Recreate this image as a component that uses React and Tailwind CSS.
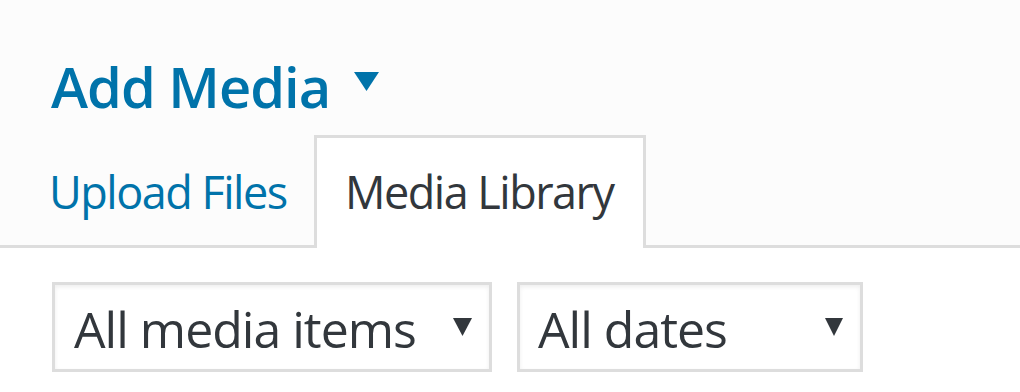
export default function App() {
  return (
    <div className="w-[1020px] h-[392px] bg-white overflow-hidden font-['Open_Sans','Noto_Sans',sans-serif]">
      {/* modal header */}
      <div className="bg-[#fcfcfc] pt-[58px]">
        <h1 className="flex items-start pl-[51px] h-[56px] text-[56px] leading-[56px] font-semibold text-[#0073aa] tracking-[-1px]">
          <span>Add Media</span>
          <svg width="25" height="19" viewBox="0 0 25 19" className="ml-[24px] mt-[14px]">
            <polygon points="0,0 25,0 12.5,19" fill="#0073aa" />
          </svg>
        </h1>

        <div className="mt-[21px] flex items-end h-[113px] border-b-[3px] border-[#dddddd]">
          <div className="w-[314px] h-[110px] pl-[49px] pt-[34px] text-[45px] leading-[45px] text-[#0073aa] tracking-[-1.5px]">
            Upload Files
          </div>
          <div className="w-[332px] h-[113px] -mb-[3px] border-[3px] border-b-0 border-[#dddddd] bg-white pl-[28px] pt-[31px] text-[45px] leading-[45px] text-[#32373c] tracking-[-1.5px]">
            Media Library
          </div>
        </div>
      </div>

      {/* filters */}
      <div className="flex gap-[25px] pl-[52px] mt-[34px]">
        <div className="flex justify-between items-center w-[440px] h-[90px] border-[3px] border-[#dddddd] bg-white shadow-[inset_0_2px_4px_rgba(0,0,0,0.07)] pl-[19px] pr-[17px]">
          <span className="self-start pt-[19px] text-[50px] leading-[50px] text-[#32373c] tracking-[-1px]">All media items</span>
          <svg width="19" height="18" viewBox="0 0 19 18">
            <polygon points="0,0 19,0 9.5,18" fill="#32373c" />
          </svg>
        </div>
        <div className="flex justify-between items-center w-[346px] h-[90px] border-[3px] border-[#dddddd] bg-white shadow-[inset_0_2px_4px_rgba(0,0,0,0.07)] pl-[18px] pr-[17px]">
          <span className="self-start pt-[19px] text-[50px] leading-[50px] text-[#32373c] tracking-[-1px]">All dates</span>
          <svg width="18" height="18" viewBox="0 0 18 18">
            <polygon points="0,0 18,0 9,18" fill="#32373c" />
          </svg>
        </div>
      </div>
    </div>
  );
}
